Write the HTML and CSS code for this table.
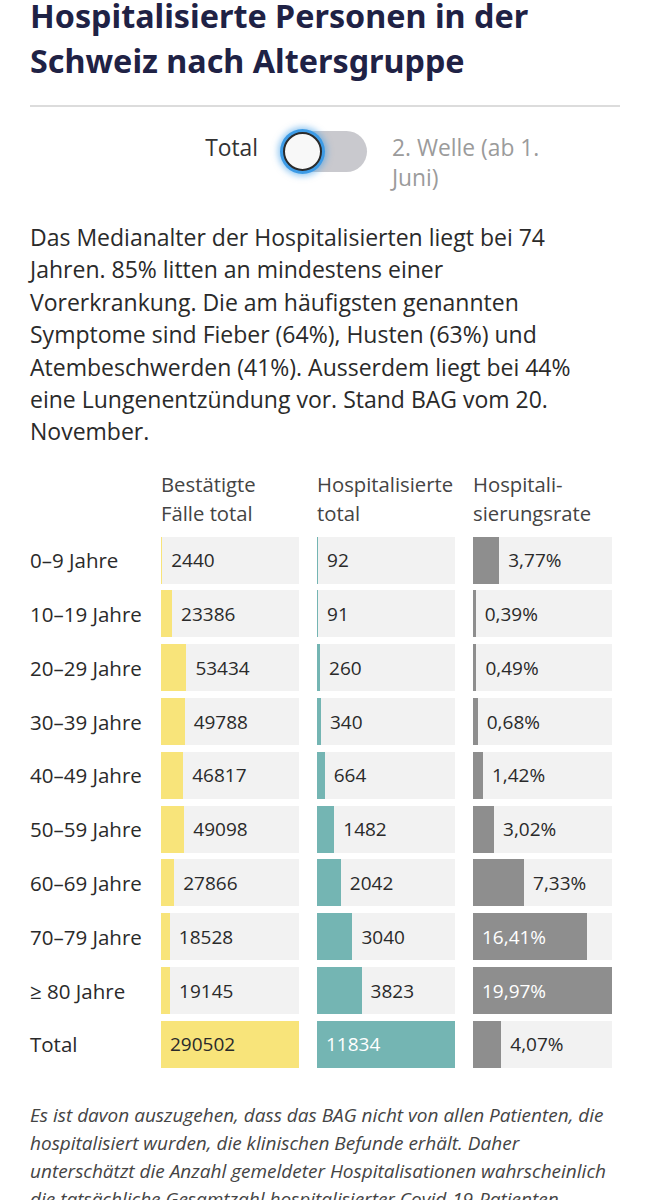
FILE: index.html
```html
<!DOCTYPE html>
<html lang="de">
<head>
    <meta charset="UTF-8">
    <meta name="viewport" content="width=device-width, initial-scale=1.0">
    <title>Hospitalisierte Personen nach Altersgruppe</title>
    <link rel="stylesheet" href="styles.css">
</head>
<body>
    <div class="chart">
        <h1 class="chart-title">Hospitalisierte Personen in der Schweiz nach Altersgruppe</h1>
        <hr class="divider">

        <div class="switch-row">
            <span class="switch-label">Total</span>
            <span class="switch"><span class="knob"></span></span>
            <span class="switch-alt">2. Welle (ab 1. Juni)</span>
        </div>

        <p class="summary">Das Medianalter der Hospitalisierten liegt bei 74 Jahren. 85% litten an mindestens einer Vorerkrankung. Die am häufigsten genannten Symptome sind Fieber (64%), Husten (63%) und Atembeschwerden (41%). Ausserdem liegt bei 44% eine Lungenentzündung vor. Stand BAG vom 20. November.</p>

        <div class="age-table" id="ageTable">
            <div class="head"></div>
            <div class="head">Bestätigte Fälle total</div>
            <div class="head">Hospitalisierte total</div>
            <div class="head">Hospitali-<br>sierungsrate</div>
            <!-- rows are generated below -->
        </div>

        <p class="note">Es ist davon auszugehen, dass das BAG nicht von allen Patienten, die hospitalisiert wurden, die klinischen Befunde erhält. Daher unterschätzt die Anzahl gemeldeter Hospitalisationen wahrscheinlich die tatsächliche Gesamtzahl hospitalisierter Covid-19-Patienten.</p>
    </div>

    <script>
        const rows = [
            { label: '0–9 Jahre', cases: 2440, hosp: 92, rate: 3.77 },
            { label: '10–19 Jahre', cases: 23386, hosp: 91, rate: 0.39 },
            { label: '20–29 Jahre', cases: 53434, hosp: 260, rate: 0.49 },
            { label: '30–39 Jahre', cases: 49788, hosp: 340, rate: 0.68 },
            { label: '40–49 Jahre', cases: 46817, hosp: 664, rate: 1.42 },
            { label: '50–59 Jahre', cases: 49098, hosp: 1482, rate: 3.02 },
            { label: '60–69 Jahre', cases: 27866, hosp: 2042, rate: 7.33 },
            { label: '70–79 Jahre', cases: 18528, hosp: 3040, rate: 16.41 },
            { label: '≥ 80 Jahre', cases: 19145, hosp: 3823, rate: 19.97 },
            { label: 'Total', cases: 290502, hosp: 11834, rate: 4.07 }
        ];

        const maxCases = Math.max(...rows.map(r => r.cases));
        const maxHosp = Math.max(...rows.map(r => r.hosp));
        const maxRate = Math.max(...rows.map(r => r.rate));

        function barCell(value, max, kind, text) {
            const pct = value / max * 100;
            const inside = pct > 50;
            return `
                <div class="cell ${kind}${inside ? ' inside' : ''}">
                    <span class="bar" style="width: ${pct.toFixed(2)}%"></span>
                    <span class="value">${text}</span>
                </div>`;
        }

        const table = document.getElementById('ageTable');
        rows.forEach(r => {
            table.insertAdjacentHTML('beforeend', `
                <div class="label">${r.label}</div>
                ${barCell(r.cases, maxCases, 'cases', r.cases)}
                ${barCell(r.hosp, maxHosp, 'hosp', r.hosp)}
                ${barCell(r.rate, maxRate, 'rate', r.rate.toFixed(2).replace('.', ',') + '%')}
            `);
        });
    </script>
</body>
</html>
```

FILE: styles.css
```css
body {
    margin: 0;
    background-color: #fff;
    color: #2a2a2a;
    font-family: "Open Sans", Lato, sans-serif;
}
.chart {
    padding: 0 30px;
}
.chart-title {
    margin: -7px 0 0;
    font-family: "Noto Sans", sans-serif;
    font-size: 32.3px;
    font-weight: 700;
    line-height: 45px;
    color: #1f2245;
}
.divider {
    margin: 22px 0 0;
    border: none;
    border-top: 2px solid #dcdcdc;
}
.switch-row {
    display: grid;
    grid-template-columns: 1fr auto 1fr;
    column-gap: 25px;
    align-items: start;
    margin-top: 24px;
    font-size: 22.8px;
    line-height: 30px;
}
.switch-label {
    text-align: right;
    padding-top: 2px;
    color: #333;
}
.switch {
    position: relative;
    display: block;
    width: 84px;
    height: 41px;
    border-radius: 21px;
    background-color: #c9c9ce;
}
.knob {
    position: absolute;
    left: 0;
    top: 1px;
    width: 35px;
    height: 35px;
    border: 2px solid #2b2b2b;
    border-radius: 50%;
    background-color: #f8f8f8;
    box-shadow: 0 0 0 3px #3d9be6, 0 0 6px 5px rgba(61, 155, 230, 0.55);
}
.switch-alt {
    max-width: 165px;
    padding-top: 2px;
    color: #9b9b9b;
}
.summary {
    max-width: 576px;
    margin: 28px 0 0;
    font-size: 23px;
    line-height: 32.4px;
    color: #2a2a2a;
}
.age-table {
    display: grid;
    grid-template-columns: 113px 138px 138px 139px;
    grid-template-rows: 60px;
    grid-auto-rows: 47px;
    column-gap: 18px;
    row-gap: 6.8px;
    margin-top: 22px;
}
.head {
    align-self: start;
    font-size: 20.3px;
    line-height: 29px;
    color: #444;
}
.label {
    display: flex;
    align-items: center;
    font-size: 20.5px;
    color: #2a2a2a;
}
.cell {
    display: flex;
    align-items: center;
    background-color: #f2f2f2;
    font-size: 19px;
    position: relative;
}
.bar {
    align-self: stretch;
    flex-shrink: 0;
}
.value {
    padding-left: 9px;
}
.cell.inside .value {
    position: absolute;
    left: 0;
}
.cases .bar {
    background-color: #f8e47a;
}
.hosp .bar {
    background-color: #74b5b3;
}
.rate .bar {
    background-color: #8e8e8e;
}
.hosp.inside .value,
.rate.inside .value {
    color: #fff;
}
.note {
    margin: 33px 0 0;
    font-size: 19px;
    font-style: italic;
    line-height: 28px;
    color: #444;
}
```
